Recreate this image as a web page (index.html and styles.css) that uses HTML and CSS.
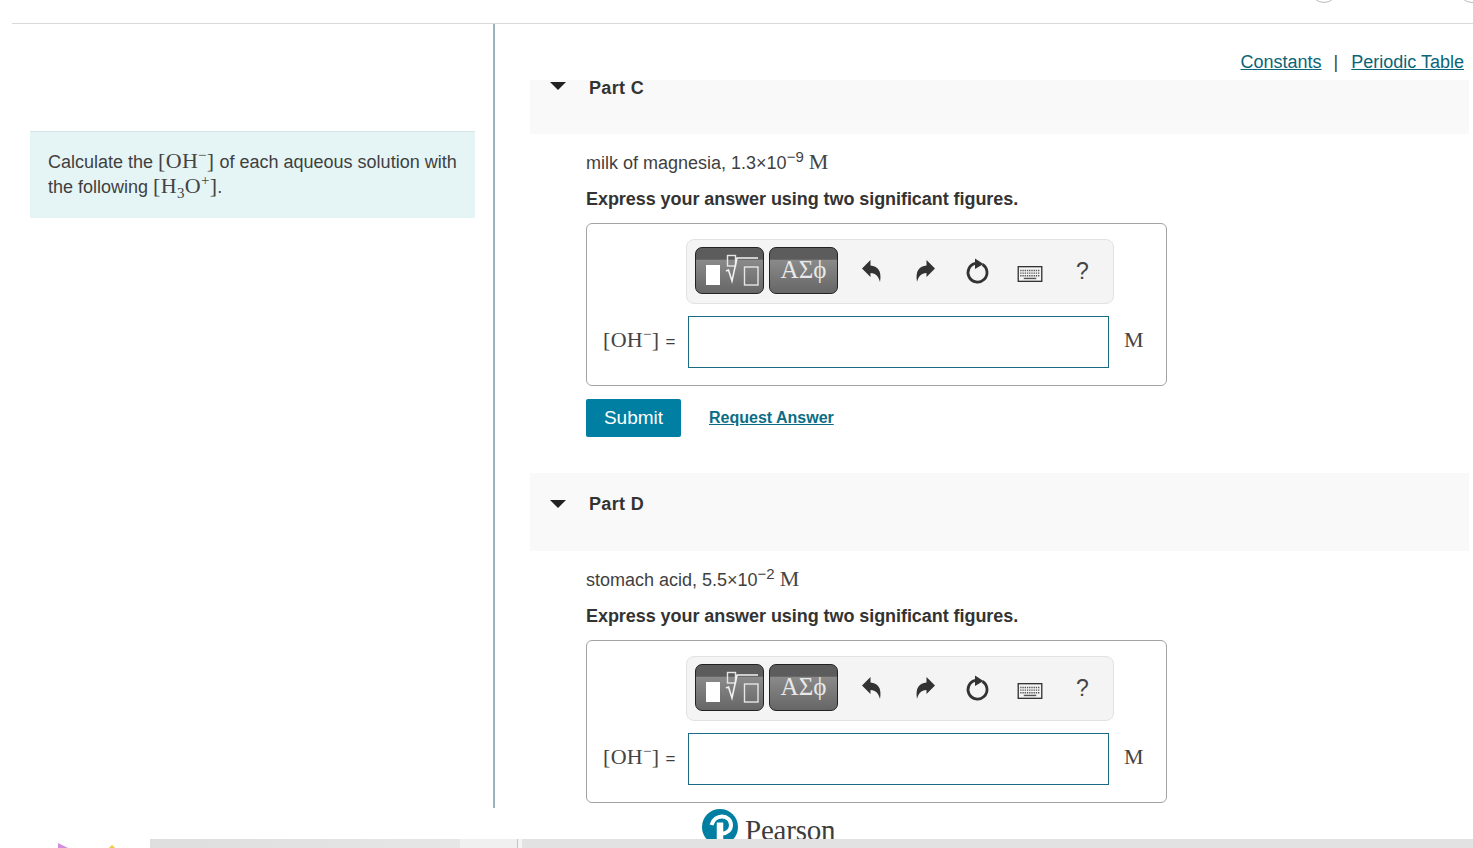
FILE: index.html
```html
<!DOCTYPE html>
<html lang="en">
<head>
<meta charset="UTF-8">
<meta name="viewport" content="width=device-width, initial-scale=1.0">
<title>Part C and Part D</title>
<link rel="stylesheet" href="styles.css">
</head>
<body>
  <svg class="defs" width="0" height="0">
    <symbol id="arrow-down" viewBox="0 0 16 10"><path d="M0 1h16L8 9z"/></symbol>
    <symbol id="undo" viewBox="0 0 22 26"><path d="M1 11.500 9.500 3v5.500c7 .5 11.500 5 9.500 16.500-1.500-5.500-4-8.800-9.500-9V20z"/></symbol>
    <symbol id="redo" viewBox="0 0 22 26"><path d="M21 11.500 12.500 3v5.500c-7 .5-11.500 5-9.500 16.500 1.500-5.500 4-8.800 9.500-9V20z"/></symbol>
    <symbol id="reset" viewBox="0 0 26 28"><path d="M11.500 6.300a9.500 9.500 0 1 0 7 1.200" fill="none" stroke="#333" stroke-width="2.800"/><path d="M11 1.500l8.500 5.500-8.500 5z" fill="#333"/></symbol>
    <symbol id="keyboard" viewBox="0 0 28 18">
      <rect x=".75" y=".75" width="26.500" height="16.500" fill="#f4f4f4" stroke="#333" stroke-width="1.500"/>
      <path d="M3 5h22M3 8h22M3 11h22" stroke="#555" stroke-width="1.600" stroke-dasharray="1.500 1"/>
      <path d="M7 14h14" stroke="#555" stroke-width="1.600"/>
    </symbol>
    <symbol id="template" viewBox="0 0 69 47">
      <rect x="11" y="18" width="14" height="20" fill="#fff"/>
      <rect x="32.500" y="8.500" width="8" height="10.500" fill="none" stroke="#e6e6e6" stroke-width="1.400"/>
      <path d="M31 24l2.500-1 3.500 11 5-23h21" fill="none" stroke="#f2f2f2" stroke-width="1.600"/>
      <rect x="49.500" y="20" width="13.500" height="18" fill="none" stroke="#e6e6e6" stroke-width="1.400"/>
    </symbol>
  </svg>

  <header class="topbar">
    <span class="ring ring-a"></span>
    <span class="ring ring-b"></span>
  </header>

  <div class="main">
    <aside class="side">
      <div class="intro">
        <p>Calculate the <span class="math">[OH<sup>−</sup>]</span> of each aqueous solution with the following <span class="math">[H<sub>3</sub>O<sup>+</sup>]</span>.</p>
      </div>
    </aside>

    <section class="work">
      <div class="links">
        <a href="#">Constants</a><span class="sep">|</span><a href="#">Periodic Table</a>
      </div>

      <div class="part-head cut">
        <svg class="caret"><use href="#arrow-down"/></svg>
        <h3>Part C</h3>
      </div>
      <div class="part-body">
        <p class="prompt">milk of magnesia, 1.3×10<sup>−9</sup> <span class="math">M</span></p>
        <p class="hint">Express your answer using two significant figures.</p>
        <div class="answer-box">
          <div class="toolbar">
            <button class="tool"><svg class="tool-art"><use href="#template"/></svg></button>
            <button class="tool greek">ΑΣϕ</button>
            <svg class="ico ico-undo"><use href="#undo"/></svg>
            <svg class="ico ico-redo"><use href="#redo"/></svg>
            <svg class="ico ico-reset"><use href="#reset"/></svg>
            <svg class="ico ico-keys"><use href="#keyboard"/></svg>
            <span class="help">?</span>
          </div>
          <div class="answer-row">
            <label class="answer-label"><span class="math">[OH<sup>−</sup>]</span> <span class="eq">=</span></label>
            <input class="answer-input" type="text">
            <span class="math unit">M</span>
          </div>
        </div>
        <div class="actions">
          <button class="submit">Submit</button>
          <a class="request" href="#">Request Answer</a>
        </div>
      </div>

      <div class="part-head">
        <svg class="caret"><use href="#arrow-down"/></svg>
        <h3>Part D</h3>
      </div>
      <div class="part-body last">
        <p class="prompt">stomach acid, 5.5×10<sup>−2</sup> <span class="math">M</span></p>
        <p class="hint">Express your answer using two significant figures.</p>
        <div class="answer-box">
          <div class="toolbar">
            <button class="tool"><svg class="tool-art"><use href="#template"/></svg></button>
            <button class="tool greek">ΑΣϕ</button>
            <svg class="ico ico-undo"><use href="#undo"/></svg>
            <svg class="ico ico-redo"><use href="#redo"/></svg>
            <svg class="ico ico-reset"><use href="#reset"/></svg>
            <svg class="ico ico-keys"><use href="#keyboard"/></svg>
            <span class="help">?</span>
          </div>
          <div class="answer-row">
            <label class="answer-label"><span class="math">[OH<sup>−</sup>]</span> <span class="eq">=</span></label>
            <input class="answer-input" type="text">
            <span class="math unit">M</span>
          </div>
        </div>
      </div>

      <div class="brand">
        <svg class="brand-mark" viewBox="0 0 36 36">
          <circle cx="18" cy="18" r="18" fill="#007fa3"/>
          <path d="M9.500 16C11 10.500 15.500 7.500 20 7.500c5 0 9 3.500 9 8.500s-4 8.500-9 8.500h-3" fill="none" stroke="#fff" stroke-width="4"/>
          <path d="M18 13.500V36" stroke="#fff" stroke-width="6.500"/>
        </svg>
        <span class="brand-name">Pearson</span>
      </div>
    </section>
  </div>

  <footer class="strip">
    <div class="strip-start">
      <svg class="strip-mark mark-purple" viewBox="0 0 10 5"><path d="M0 0l10 5H0z" fill="#cf8fdc"/></svg>
      <svg class="strip-mark mark-yellow" viewBox="0 0 6 3"><path d="M3 0l3 3H0z" fill="#f2c83c"/></svg>
    </div>
    <div class="strip-a"></div>
    <div class="strip-b"></div>
    <div class="strip-c"></div>
  </footer>
</body>
</html>
```

FILE: styles.css
```css
body { margin: 0; height: 848px; overflow: hidden; background: #fff; color: #3f3f3f; font-family: "Liberation Sans", Arial, sans-serif; font-size: 18px; }
p { margin: 0; }
.defs { position: absolute; }
.math { font-family: "Liberation Serif", "Times New Roman", serif; font-size: 22px; line-height: 1; letter-spacing: .3px; color: #444; }
.math sup, .math sub { font-size: 15px; line-height: 0; }
sup { line-height: 0; }

.topbar { position: relative; height: 23px; margin-left: 12px; border-bottom: 1px solid #d9d9d9; overflow: hidden; }
.ring { position: absolute; bottom: 20px; width: 26px; height: 26px; border: 1px solid #bbb; border-radius: 50%; }
.ring-a { left: 1298px; }
.ring-b { left: 1446px; }

.main { display: flex; height: 815px; overflow: hidden; }
.side { box-sizing: border-box; width: 495px; height: 784px; padding: 107px 18px 0 30px; border-right: 2px solid #9db2bf; }
.intro { box-sizing: border-box; height: 87px; padding: 18px 10px 0 18px; background: #e5f5f6; border-top: 1px solid #d5e5e7; line-height: 25px; }

.work { flex: 1; padding: 0 4px 0 35px; min-width: 0; }
.links { height: 56px; box-sizing: border-box; padding: 26px 5px 0 0; text-align: right; line-height: 24px; }
.links a { color: #0b6478; }
.sep { margin: 0 13px 0 12px; }

.part-head { display: flex; height: 78px; box-sizing: border-box; padding: 20px 0 0 20px; background: #f9f9f9; }
.part-head.cut { height: 54px; padding-top: 0; }
.part-head h3 { margin: 0 0 0 23px; font-size: 18px; line-height: 22px; letter-spacing: .35px; color: #333; }
.part-head.cut h3 { margin-top: -3px; }
.caret { width: 16px; height: 10px; margin-top: 6px; fill: #222; }
.part-head.cut .caret { margin-top: 1px; }

.part-body { padding: 16px 0 0 56px; height: 339px; box-sizing: border-box; }
.part-body.last { height: 258px; }
.prompt { height: 27px; line-height: 27px; }
.prompt sup { font-size: 15px; }
.hint { margin-top: 10px; height: 25px; line-height: 25px; font-weight: bold; letter-spacing: -.06px; color: #333; }

.answer-box { box-sizing: border-box; width: 581px; height: 163px; margin-top: 11px; border: 1px solid #a3a3a3; border-radius: 6px; padding: 15px 0 0 16px; }
.toolbar { box-sizing: border-box; display: flex; align-items: center; width: 428px; height: 65px; margin-left: 83px; padding: 0 0 2px 8px; background: #f4f4f4; border: 1px solid #e2e2e2; border-radius: 8px; position: relative; }
.tool { box-sizing: border-box; width: 69px; height: 47px; margin-right: 5px; padding: 0; border: 1.500px solid #222; border-radius: 7px; background: linear-gradient(#5c5c5c 0, #5c5c5c 25%, #8a8a8a 27%, #666 100%); color: #e8e8e8; }
.tool-art { display: block; width: 69px; height: 47px; margin: -1.500px; }
.greek { padding-bottom: 2px; font-family: "Liberation Serif", serif; font-size: 25px; }
.ico { position: absolute; fill: #333; }
.ico-undo { left: 174px; top: 17px; width: 22px; height: 26px; }
.ico-redo { left: 227px; top: 17px; width: 22px; height: 26px; }
.ico-reset { left: 277px; top: 17px; width: 26px; height: 28px; }
.ico-keys { left: 330px; top: 26px; width: 26px; height: 16px; }
.help { position: absolute; left: 389px; top: 17px; font-size: 23px; line-height: 28px; color: #444; }

.answer-row { display: flex; align-items: center; margin-top: 12px; }
.answer-label { width: 85px; padding-bottom: 4px; white-space: nowrap; }
.eq { margin-left: 1px; font-size: 17px; }
.answer-input { box-sizing: border-box; width: 421px; height: 52px; padding: 0 8px; border: 1px solid #1a6c85; background: #fff; }
.unit { margin-left: 15px; padding-bottom: 4px; }

.actions { display: flex; align-items: center; margin-top: 13px; }
.submit { width: 95px; height: 38px; padding: 0; border: 0; border-radius: 2px; background: #007fa3; color: #fff; font: 19px "Liberation Sans", Arial, sans-serif; }
.request { margin-left: 28px; color: #0b6d85; font-size: 16px; font-weight: bold; }

.brand { display: flex; align-items: flex-start; height: 36px; margin-left: 172px; }
.brand-mark { width: 36px; height: 36px; flex: none; }
.brand-name { margin: 4px 0 0 7px; font-family: "Liberation Serif", serif; font-size: 29px; line-height: 34px; color: #3d3d3d; letter-spacing: -.2px; }

.strip { display: flex; height: 9px; background: #e2e2e2; overflow: hidden; }
.strip-start { display: flex; width: 150px; background: #fff; }
.strip-mark { flex: none; }
.mark-purple { width: 10px; height: 5px; margin: 4px 0 0 58px; }
.mark-yellow { width: 6px; height: 3px; margin: 6px 0 0 41px; }
.strip-a { width: 310px; background: linear-gradient(90deg, #dedede, #e6e6e6); }
.strip-b { width: 57px; background: #f0f0f0; border-right: 1px solid #c4c4c4; }
.strip-c { width: 4px; background: #f4f4f4; }
```
